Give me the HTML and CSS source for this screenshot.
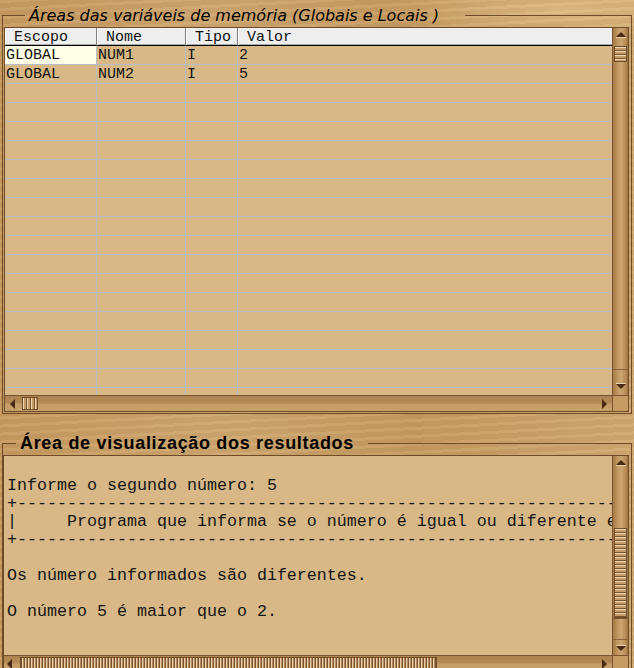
FILE: index.html
```html
<!DOCTYPE html>
<html lang="pt">
<head>
<meta charset="utf-8">
<title>Áreas de memória</title>
<link rel="stylesheet" href="styles.css">
</head>
<body>
<fieldset class="group group-vars">
  <legend class="legend-vars">Áreas das variáveis de memória (Globais e Locais )</legend>
  <div class="gridbox">
    <div class="viewport">
      <div class="vars">
        <div class="th">Escopo</div><div class="th">Nome</div><div class="th">Tipo</div><div class="th last">Valor</div>
        <div class="td sel">GLOBAL</div><div class="td">NUM1</div><div class="td">I</div><div class="td last">2</div>
        <div class="td">GLOBAL</div><div class="td">NUM2</div><div class="td">I</div><div class="td last">5</div>
        <div class="td"></div><div class="td"></div><div class="td"></div><div class="td last"></div>
        <div class="td"></div><div class="td"></div><div class="td"></div><div class="td last"></div>
        <div class="td"></div><div class="td"></div><div class="td"></div><div class="td last"></div>
        <div class="td"></div><div class="td"></div><div class="td"></div><div class="td last"></div>
        <div class="td"></div><div class="td"></div><div class="td"></div><div class="td last"></div>
        <div class="td"></div><div class="td"></div><div class="td"></div><div class="td last"></div>
        <div class="td"></div><div class="td"></div><div class="td"></div><div class="td last"></div>
        <div class="td"></div><div class="td"></div><div class="td"></div><div class="td last"></div>
        <div class="td"></div><div class="td"></div><div class="td"></div><div class="td last"></div>
        <div class="td"></div><div class="td"></div><div class="td"></div><div class="td last"></div>
        <div class="td"></div><div class="td"></div><div class="td"></div><div class="td last"></div>
        <div class="td"></div><div class="td"></div><div class="td"></div><div class="td last"></div>
        <div class="td"></div><div class="td"></div><div class="td"></div><div class="td last"></div>
        <div class="td"></div><div class="td"></div><div class="td"></div><div class="td last"></div>
        <div class="td"></div><div class="td"></div><div class="td"></div><div class="td last"></div>
        <div class="td"></div><div class="td"></div><div class="td"></div><div class="td last"></div>
        <div class="td"></div><div class="td"></div><div class="td"></div><div class="td last"></div>
      </div>
    </div>
    <div class="vscroll">
      <div class="vbtn up"><svg width="10" height="6" viewBox="0 0 10 6"><polygon points="0,5 5,0 10,5" fill="#4a2a12"/><line x1="0" y1="5.5" x2="10" y2="5.5" stroke="#e8d2ac" stroke-width="1"/></svg></div>
      <div class="vthumb small"></div>
      <div class="vtrack"></div>
      <div class="vbtn down tall"><svg width="10" height="6" viewBox="0 0 10 6"><polygon points="0,1 5,6 10,1" fill="#4a2a12"/><line x1="0" y1="0.5" x2="10" y2="0.5" stroke="#e8d2ac" stroke-width="1"/></svg></div>
    </div>
    <div class="hscroll">
      <div class="hbtn left"><svg width="6" height="10" viewBox="0 0 6 10"><polygon points="5,0 0,5 5,10" fill="#4a2a12"/></svg></div>
      <div class="hthumb small"></div>
      <div class="htrack"></div>
      <div class="hbtn right"><svg width="6" height="10" viewBox="0 0 6 10"><polygon points="1,0 6,5 1,10" fill="#4a2a12"/></svg></div>
    </div>
    <div class="corner"></div>
  </div>
</fieldset>

<fieldset class="group group-out">
  <legend class="legend-out">Área de visualização dos resultados</legend>
  <div class="outbox">
    <pre class="output">Informe o segundo número: 5
+------------------------------------------------------------------------------
|     Programa que informa se o número é igual ou diferente entre dois números
+------------------------------------------------------------------------------

Os número informados são diferentes.

O número 5 é maior que o 2.</pre>
    <div class="vscroll">
      <div class="vbtn up"><svg width="10" height="6" viewBox="0 0 10 6"><polygon points="0,5 5,0 10,5" fill="#4a2a12"/><line x1="0" y1="5.5" x2="10" y2="5.5" stroke="#e8d2ac" stroke-width="1"/></svg></div>
      <div class="vtrack pre"></div>
      <div class="vthumb big"></div>
      <div class="vtrack boxed"></div>
      <div class="vbtn down"><svg width="10" height="6" viewBox="0 0 10 6"><polygon points="0,1 5,6 10,1" fill="#4a2a12"/><line x1="0" y1="0.5" x2="10" y2="0.5" stroke="#e8d2ac" stroke-width="1"/></svg></div>
    </div>
    <div class="hscroll">
      <div class="hbtn left"><svg width="6" height="10" viewBox="0 0 6 10"><polygon points="5,0 0,5 5,10" fill="#4a2a12"/></svg></div>
      <div class="hthumb big"></div>
      <div class="htrack"></div>
      <div class="hbtn right"><svg width="6" height="10" viewBox="0 0 6 10"><polygon points="1,0 6,5 1,10" fill="#4a2a12"/></svg></div>
    </div>
    <div class="corner"></div>
  </div>
</fieldset>
</body>
</html>
```

FILE: styles.css
```css
* { box-sizing: border-box; }

html, body {
  margin: 0;
  padding: 0;
}

body {
  width: 634px;
  height: 668px;
  overflow: hidden;
  background-color: #c99f67;
  background-image:
    repeating-linear-gradient(177deg, rgba(255, 236, 190, 0.07) 0 3px, rgba(110, 70, 25, 0.05) 3px 8px),
    radial-gradient(ellipse 180px 30px at 560px 10px, rgba(235, 205, 150, 0.55), rgba(235, 205, 150, 0) 100%),
    linear-gradient(90deg, #c69a61 0%, #cda670 35%, #c59a61 65%, #cfa872 100%);
  font-family: "Liberation Mono", monospace;
  color: #111;
}

.group {
  margin: 4px 2px 0;
  padding: 1px 2px 1px 1px;
  border: 1px solid #6e4c27;
  min-width: 0;
}

.group-out {
  margin-top: 18px;
  padding: 1px 2px 0 0;
  border-bottom: 0;
}

.legend-vars {
  margin-left: 21px;
  padding: 2px 26px 0 4px;
  font: italic 16px/20px "DejaVu Sans", sans-serif;
  color: #000;
}

.legend-out {
  margin-left: 13px;
  padding: 0 14px 0 4px;
  font: bold 18px/22px "Liberation Sans", Arial, sans-serif;
  letter-spacing: 0.68px;
  color: #000;
}

/* upper grid */
.gridbox {
  display: grid;
  grid-template-columns: 1fr 16px;
  grid-template-rows: 1fr 16px;
  height: 385px;
  border: 1px solid #6e4c27;
  background: #d7b886;
}

.viewport {
  overflow: hidden;
  background: #d7b886;
}

.vars {
  display: grid;
  grid-template-columns: 92px 89px 52px 374px;
  grid-template-rows: 18px;
  grid-auto-rows: 19px;
  font-size: 15px;
  line-height: 18px;
}

.th {
  background: #eeeeee;
  border-right: 1px solid #808080;
  border-bottom: 1px solid #000;
  box-shadow: inset 1px 0 0 #ffffff, inset 0 -1px 0 #a9a9a9;
  padding: 1px 0 0 9px;
  line-height: 17px;
  white-space: nowrap;
}

.th.last { border-right: 0; }

.td {
  border-right: 1px solid #b9bdc7;
  border-bottom: 1px solid #b9bdc7;
  padding: 1px 0 0 1px;
  white-space: nowrap;
  overflow: hidden;
}

.td.last { border-right: 0; }
.td.sel { background: #fffee6; }

/* scrollbars */
.vscroll {
  display: flex;
  flex-direction: column;
  border-left: 1px solid #7a5430;
  background: linear-gradient(90deg, #a57a46 0, #c39a64 35%, #cba571 55%, #b68b55 85%, #9c7242 100%);
}

.vbtn {
  height: 16px;
  flex: none;
  display: flex;
  justify-content: center;
  align-items: center;
}

.vbtn.up { height: 18px; align-items: flex-start; padding-top: 4px; }
.vbtn.down { align-items: flex-end; padding-bottom: 4px; border-top: 1px solid #8a6238; }
.vbtn.down.tall { height: 26px; padding-bottom: 6px; }

.vtrack { flex: 1; }
.vtrack.pre { flex: none; height: 54px; }
.vtrack.boxed { border-top: 1px solid #7a5430; }

.vthumb {
  flex: none;
  border: 1px solid #6e4c27;
  margin: 0 1px;
  background: repeating-linear-gradient(180deg, #eed8b2 0 1px, #c49a66 1px 3px, #7a5430 3px 4px);
}

.vthumb.small { height: 16px; }
.vthumb.big { height: 90px; }

.hscroll {
  display: flex;
  align-items: stretch;
  border-top: 1px solid #7a5430;
  background: linear-gradient(180deg, #ad8350 0, #b48a56 45%, #c59d68 55%, #c79f69 100%);
}

.hbtn {
  width: 17px;
  flex: none;
  display: flex;
  align-items: center;
}

.hbtn.left { padding-left: 5px; }
.hbtn.right { padding-left: 5px; width: 16px; }

.htrack { flex: 1; }

.hthumb {
  flex: none;
  border: 1px solid #6e4c27;
  margin: 1px 0;
  background: repeating-linear-gradient(90deg, #eed8b2 0 1px, #c49a66 1px 3px, #7a5430 3px 4px);
}

.hthumb.small { width: 16px; }
.hthumb.big {
  width: 417px;
  background: repeating-linear-gradient(90deg, #7a5430 0 1px, #ead2aa 1px 2px, #b58c5a 2px 3px);
}

.corner {
  background: #c49b62;
  border-left: 1px solid #7a5430;
  border-top: 1px solid #7a5430;
}

/* output area */
.outbox {
  display: grid;
  grid-template-columns: 1fr 16px;
  grid-template-rows: 199px 16px;
  height: 217px;
  border: 1px solid #6e4c27;
  background: #d7b886;
}

.output {
  margin: 0;
  padding: 21px 0 0 3px;
  overflow: hidden;
  white-space: pre;
  font-family: "Liberation Mono", monospace;
  font-size: 16.67px;
  line-height: 18px;
  color: #151515;
}

.outbox .hbtn.left { width: 16px; padding-left: 3px; }
```
